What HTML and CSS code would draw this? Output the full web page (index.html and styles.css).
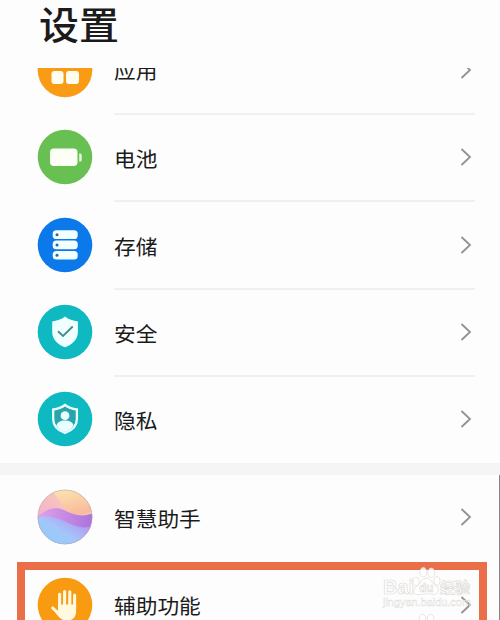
FILE: index.html
```html
<!DOCTYPE html>
<html lang="zh-CN">
<head>
    <meta charset="UTF-8">
    <meta name="viewport" content="width=device-width, initial-scale=1.0">
    <title>设置</title>
    <link rel="stylesheet" href="styles.css">
</head>
<body>
    <div class="page">
        <h1>设置</h1>
        <div class="list">
            <div class="row first">
                <svg class="icon" viewBox="0 0 56 56">
                    <circle cx="28" cy="28" r="27.3" fill="#f99b14"/>
                    <g fill="#fffdf0">
                        <rect x="15" y="13" width="12" height="12" rx="3"/>
                        <rect x="29" y="13" width="12" height="12" rx="3"/>
                        <rect x="14.5" y="29" width="12" height="13" rx="3"/>
                        <rect x="29" y="29" width="13" height="13" rx="3"/>
                    </g>
                </svg>
                <div class="cell"><span>应用</span><svg class="arrow" viewBox="0 0 12 18"><path d="M1.5 1L10 9L1.5 17"/></svg></div>
            </div>
            <div class="row">
                <svg class="icon" viewBox="0 0 56 56">
                    <circle cx="28" cy="28" r="27.3" fill="#69c052"/>
                    <rect x="13" y="19.5" width="27.5" height="17.5" rx="4" fill="#fbfff5"/>
                    <path d="M42.2 24.5h1a1.5 1.5 0 0 1 1.5 1.5v5a1.5 1.5 0 0 1-1.5 1.5h-1z" fill="#e6f8d8"/>
                </svg>
                <div class="cell"><span>电池</span><svg class="arrow" viewBox="0 0 12 18"><path d="M1.5 1L10 9L1.5 17"/></svg></div>
            </div>
            <div class="row">
                <svg class="icon" viewBox="0 0 56 56">
                    <circle cx="28" cy="28" r="27.3" fill="#0c79ea"/>
                    <g fill="#f3ffff">
                        <rect x="15.7" y="13.3" width="25" height="8.7" rx="3.6"/>
                        <rect x="15.7" y="23.6" width="25" height="8.7" rx="3.6"/>
                        <rect x="15.7" y="33.9" width="25" height="8.7" rx="3.6"/>
                    </g>
                    <g fill="#246a9c">
                        <circle cx="20" cy="17.7" r="1.5"/>
                        <circle cx="20" cy="28" r="1.5"/>
                        <circle cx="20" cy="38.2" r="1.5"/>
                    </g>
                </svg>
                <div class="cell"><span>存储</span><svg class="arrow" viewBox="0 0 12 18"><path d="M1.5 1L10 9L1.5 17"/></svg></div>
            </div>
            <div class="row">
                <svg class="icon" viewBox="0 0 56 56">
                    <circle cx="28" cy="28" r="27.3" fill="#0fb9c2"/>
                    <path d="M28 12.5C31.5 15.3 36 17 40.9 17.4V28C40.9 35.5 35 40.8 28 43.3C21 40.8 15.2 35.5 15.2 28V17.4C20 17 24.5 15.3 28 12.5Z" fill="#f0ffff"/>
                    <path d="M21 27.3L26 32L35.7 22.5" fill="none" stroke="#4d8a90" stroke-width="1.9"/>
                </svg>
                <div class="cell"><span>安全</span><svg class="arrow" viewBox="0 0 12 18"><path d="M1.5 1L10 9L1.5 17"/></svg></div>
            </div>
            <div class="row last">
                <svg class="icon" viewBox="0 0 56 56">
                    <circle cx="28" cy="28" r="27.3" fill="#0fb9c2"/>
                    <path d="M28 14C31.3 16.6 35.5 18 39.9 18.5V28C39.9 35 34.7 39.6 28 42C21.3 39.6 16.2 35 16.2 28V18.5C20.5 18 24.7 16.6 28 14Z" fill="#29a4ac" stroke="#e9ffff" stroke-width="2.3"/>
                    <circle cx="28" cy="24.7" r="4.4" fill="#e9ffff"/>
                    <path d="M19.5 34.5C20.2 31 23.5 29.5 28 29.5S35.8 31 36.5 34.5C34.5 37.7 31.5 39.7 28 41C24.5 39.7 21.5 37.7 19.5 34.5Z" fill="#e9ffff"/>
                </svg>
                <div class="cell"><span>隐私</span><svg class="arrow" viewBox="0 0 12 18"><path d="M1.5 1L10 9L1.5 17"/></svg></div>
            </div>
        </div>
        <div class="gap"></div>
        <div class="list">
            <div class="row plain">
                <svg class="icon" viewBox="0 0 56 56">
                    <defs>
                        <clipPath id="ball"><circle cx="28" cy="28" r="27.3"/></clipPath>
                        <linearGradient id="warm" x1="0" y1="1" x2="1" y2="0">
                            <stop offset="0" stop-color="#efa5dc"/>
                            <stop offset="0.5" stop-color="#f6bdc2"/>
                            <stop offset="1" stop-color="#fbe3a4"/>
                        </linearGradient>
                        <linearGradient id="sun" x1="0" y1="0" x2="0.4" y2="1">
                            <stop offset="0" stop-color="#fce8b4"/>
                            <stop offset="1" stop-color="#f9bc9c"/>
                        </linearGradient>
                        <linearGradient id="violet" x1="0" y1="0" x2="1" y2="0">
                            <stop offset="0" stop-color="#e4a1ea"/>
                            <stop offset="1" stop-color="#a873dc"/>
                        </linearGradient>
                        <linearGradient id="sea" x1="0" y1="1" x2="1" y2="0.2">
                            <stop offset="0" stop-color="#82d2fb"/>
                            <stop offset="0.5" stop-color="#a4c6fa"/>
                            <stop offset="1" stop-color="#b78def"/>
                        </linearGradient>
                    </defs>
                    <g clip-path="url(#ball)">
                        <rect width="56" height="56" fill="url(#warm)"/>
                        <path d="M12 0C20 6 23 13 29 20C36 27 47 28 56 22V0Z" fill="url(#sun)"/>
                        <path d="M0 28C9 20 18 17 27 21C38 27 47 28 56 24V42H0Z" fill="url(#violet)"/>
                        <path d="M0 29C8 26 18 28 27 32C38 38 47 40 56 37V56H0Z" fill="url(#sea)"/>
                    </g>
                    <circle cx="28" cy="28" r="27" fill="none" stroke="#b99eac" stroke-opacity="0.65" stroke-width="0.8"/>
                </svg>
                <div class="cell"><span>智慧助手</span><svg class="arrow" viewBox="0 0 12 18"><path d="M1.5 1L10 9L1.5 17"/></svg></div>
            </div>
            <div class="row plain">
                <svg class="icon" viewBox="0 0 56 56">
                    <circle cx="28" cy="28" r="27.3" fill="#f99b10"/>
                    <g fill="none" stroke="#fff9df" stroke-width="3.1" stroke-linecap="round">
                        <path d="M22.6 31V17.2M27.6 29V14.5M32.8 29V14.8M37.6 31V18M15.7 31L22 37"/>
                    </g>
                    <path d="M21.1 27.5H39.1V34.5C39.1 40 35.5 43.5 30.5 43.5C25.5 43.5 23 41.5 19.5 37L16 32.5L21.1 33.5Z" fill="#fff9df"/>
                </svg>
                <div class="cell"><span>辅助功能</span><svg class="arrow" viewBox="0 0 12 18"><path d="M1.5 1L10 9L1.5 17"/></svg></div>
            </div>
        </div>
        <div class="highlight"></div>
        <div class="edge"></div>
        <svg class="watermark" viewBox="0 0 100 60">
            <g class="mark">
                <text class="latin" x="3" y="34" textLength="31" lengthAdjust="spacingAndGlyphs">Bai</text>
                <path d="M41 22C44 17 49 17 52 22L57 27C60 31 57 35 53 34.5C49 33.5 44 33.5 40 34.5C34 35.5 32 31 36 27Z"/>
                <ellipse cx="36" cy="21.5" rx="3" ry="4.2"/>
                <ellipse cx="43.3" cy="12.2" rx="3.5" ry="4.7"/>
                <ellipse cx="51.3" cy="12.8" rx="3.5" ry="4.7"/>
                <ellipse cx="57" cy="21" rx="3" ry="4.2"/>
                <text class="du" x="39" y="32">du</text>
                <text class="han" x="60" y="33">经验</text>
                <text class="site" x="3" y="46" textLength="88" lengthAdjust="spacingAndGlyphs">jingyan.baidu.com</text>
                <ellipse cx="42.5" cy="59" rx="3.3" ry="4.5"/>
                <ellipse cx="50.5" cy="59" rx="3.3" ry="4.5"/>
            </g>
        </svg>
    </div>
</body>
</html>
```
FILE: styles.css
```css
* {
    box-sizing: border-box;
}
body {
    margin: 0;
    font-family: "Noto Sans CJK SC", sans-serif;
    background-color: #fdfdfd;
    color: #1b1b1b;
}
.page {
    position: relative;
    width: 500px;
    height: 620px;
    overflow: hidden;
}
h1 {
    height: 68px;
    margin: 0;
    padding-left: 39px;
    font-size: 40px;
    font-weight: 500;
    line-height: 47px;
    transform: scaleY(0.95);
    transform-origin: 0 22px;
}
.list {
    overflow: hidden;
}
.row {
    display: flex;
    align-items: center;
    height: 87.5px;
    padding: 0 25px 0 37px;
}
.row.first {
    margin-top: -41px;
}
.row.last {
    height: 86px;
}
.icon {
    flex: none;
    width: 56px;
    height: 56px;
    margin: 0 21px 2px 0;
}
.cell {
    display: flex;
    flex: 1;
    align-items: center;
    justify-content: space-between;
    height: 100%;
    padding-right: 3px;
    border-bottom: 2px solid #f0f0f0;
    font-size: 21.7px;
    line-height: 32px;
}
.cell span {
    padding-top: 2px;
    transform: scaleY(0.95);
}
.row.last .cell,
.row.plain .cell {
    border-bottom-color: transparent;
}
.arrow {
    width: 12px;
    height: 18px;
    fill: none;
    stroke: #929292;
    stroke-width: 1.8;
}
.gap {
    height: 11.5px;
    background-color: #f5f5f5;
}
.highlight {
    position: absolute;
    top: 562px;
    left: 17px;
    width: 470px;
    height: 90px;
    border: 8.5px solid #ea6e48;
}
.edge {
    position: absolute;
    top: 475px;
    right: 0;
    bottom: 0;
    width: 1px;
    background-color: #858585;
}
.watermark {
    position: absolute;
    top: 560px;
    left: 380px;
    width: 100px;
    height: 60px;
}
.mark {
    fill: #fff;
    fill-opacity: 0.85;
    stroke: #dedbd8;
    stroke-width: 0.7;
}
.latin,
.du,
.site {
    font-family: "Liberation Sans", sans-serif;
}
.latin {
    font-size: 21px;
    font-weight: bold;
}
.du {
    font-size: 12px;
    font-weight: bold;
}
.han {
    font-size: 15px;
    font-weight: bold;
}
.site {
    font-size: 11px;
    fill-opacity: 0.4;
    stroke-width: 0.4;
}
```
